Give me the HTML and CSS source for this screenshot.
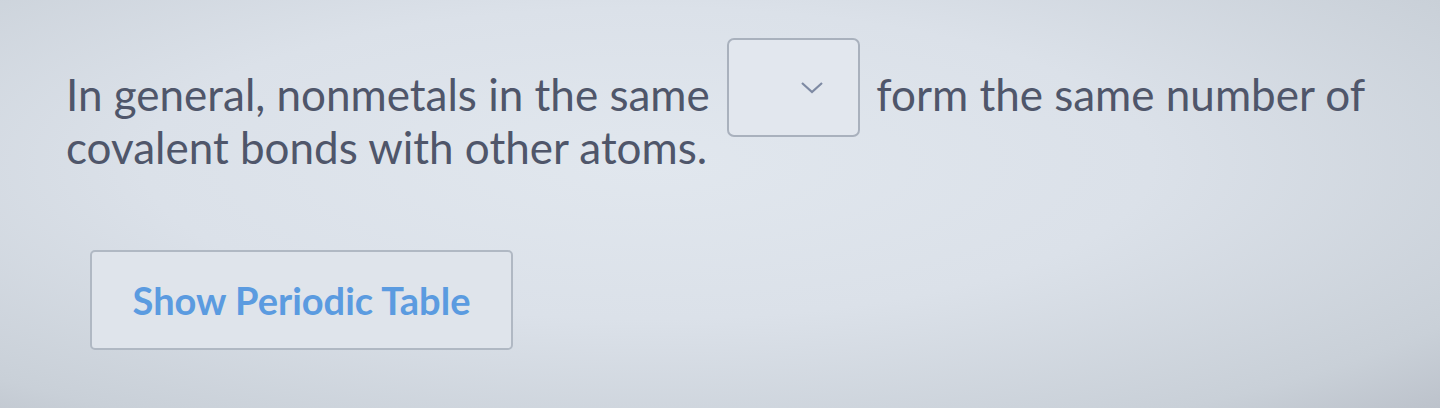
FILE: index.html
```html
<!DOCTYPE html>
<html lang="en">
  <head>
    <meta charset="UTF-8" />
    <meta name="viewport" content="width=device-width, initial-scale=1.0" />
    <title>Question</title>
    <link rel="stylesheet" href="styles.css">
  </head>
  <body>
    <main class="opgave">
      <p class="spoergsmaal">
        In general, nonmetals in the same
        <span class="vaelger">
          <svg width="24" height="14" viewBox="0 0 24 14">
            <polyline points="2,2 12,11 22,2" fill="none" stroke="#7e8aa3" stroke-width="2.2" />
          </svg>
        </span>
        form the same number of covalent bonds with other atoms.
      </p>
      <button class="tabel-knap">Show Periodic Table</button>
    </main>
  </body>
</html>
```

FILE: styles.css
```css
* {
  margin: 0;
  padding: 0;
  box-sizing: border-box;
}

body {
  width: 1440px;
  height: 408px;
  overflow: hidden;
  font-family: Lato, "Open Sans", sans-serif;
  background: radial-gradient(ellipse at 45% 40%, #e1e7ee 0%, #dbe1e9 45%, #c9d0d8 85%, #bcc2cb 100%);
}

.opgave {
  padding: 68px 0 0 66px;
  display: flex;
  flex-direction: column;
  align-items: flex-start;
}

.spoergsmaal {
  width: 1330px;
  font-size: 44px;
  line-height: 53px;
  color: #4f566a;
}

/* dropdown-boksen maa ikke skubbe linjerne fra hinanden */
.vaelger {
  display: inline-flex;
  justify-content: flex-end;
  align-items: center;
  width: 133px;
  height: 99px;
  margin: -30px 5px -48px 6px;
  padding: 0 34px 0 0;
  vertical-align: top;
  border: 2px solid #a9b1bd;
  border-radius: 7px;
  background-color: #e2e7ee;
}

.tabel-knap {
  margin: 76px 0 0 24px;
  width: 423px;
  height: 100px;
  font-family: Lato, sans-serif;
  font-size: 38px;
  font-weight: 700;
  color: #5b9be0;
  background-color: #dfe4eb;
  border: 2px solid #b0b8c3;
  border-radius: 5px;
}
```
